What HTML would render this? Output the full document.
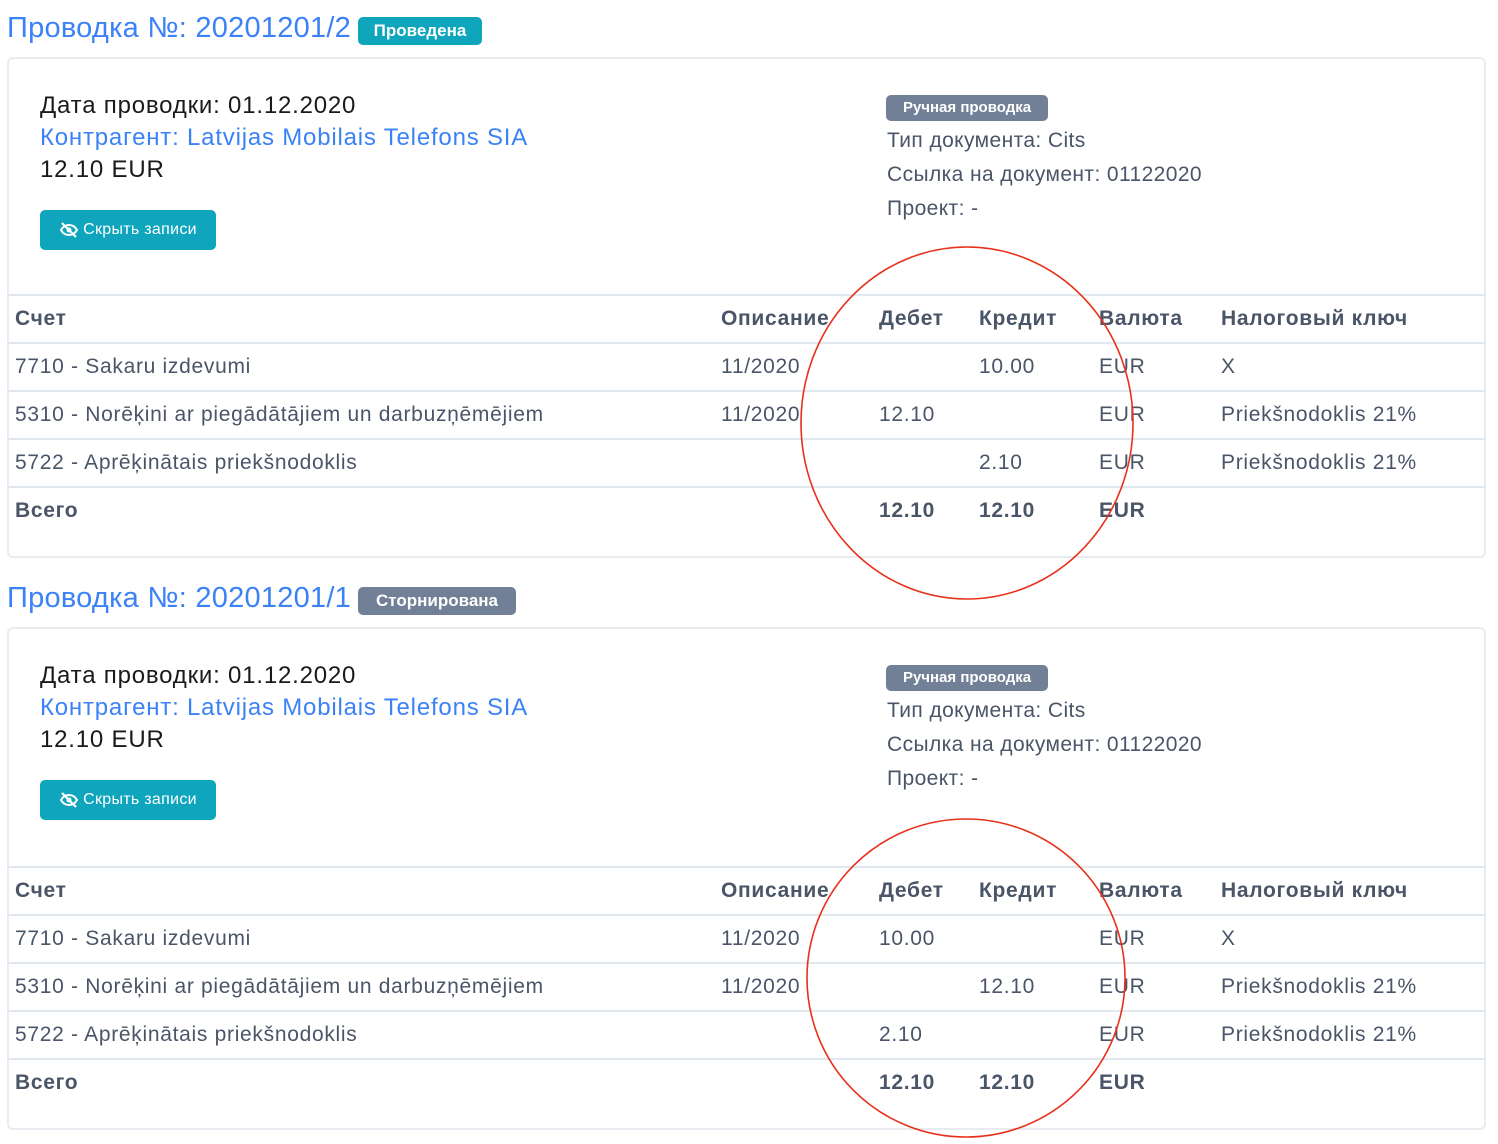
<!DOCTYPE html>
<html><head><meta charset="utf-8"><style>
*{margin:0;padding:0;box-sizing:border-box}
body{width:1498px;height:1144px;background:#fff;font-family:"Liberation Sans",sans-serif;position:relative;overflow:hidden;color:#4a5568}
.a{position:absolute;white-space:nowrap}
.title{font-size:29px;color:#3b82f6;letter-spacing:0.25px}
.badge{color:#fff;font-weight:bold;border-radius:5px;text-align:center}
.card{position:absolute;left:7px;width:1479px;border:2px solid #e8ebf0;border-radius:6px}
.line{position:absolute;left:7px;width:1479px;height:2px;background:#e2e8f0}
.t{font-size:21px;color:#4a5568;letter-spacing:0.7px;margin-top:-1px}
.i{font-size:21px;letter-spacing:0.4px;margin-top:0px}
.h{font-weight:bold;color:#4a5568}
.b{font-size:24px;letter-spacing:0.8px;margin-top:0px}
.btn{background:#0ea5bd;color:#fff;border-radius:5px;font-size:16px;letter-spacing:0.3px;display:flex;align-items:center;justify-content:center;gap:4px}
</style></head><body>

<!-- Block 1 -->
<div class="a title" style="left:7px;top:12px">Проводка №: 20201201/2</div>
<div class="a badge" style="left:358px;top:17px;width:124px;height:28px;background:#0ea5bd;font-size:17px;line-height:28px">Проведена</div>
<div class="card" style="top:57px;height:501px"></div>
<div class="a b" style="left:40px;top:92px;color:#1a1a1a">Дата проводки: 01.12.2020</div>
<div class="a b" style="left:40px;top:124px;color:#3b82f6">Контрагент: Latvijas Mobilais Telefons SIA</div>
<div class="a b" style="left:40px;top:156px;color:#1a1a1a">12.10 EUR</div>
<div class="a btn" style="left:40px;top:210px;width:176px;height:40px"><svg width="20" height="16" viewBox="0 0 20 16"><path d="M2 8c2-3.5 5-5 8-5s6 1.5 8 5c-2 3.5-5 5-8 5s-6-1.5-8-5z" fill="none" stroke="#fff" stroke-width="2"/><circle cx="10" cy="8" r="2.5" fill="#fff"/><path d="M3 1l14 14" stroke="#fff" stroke-width="2.2"/></svg>Скрыть записи</div>
<div class="a badge" style="left:886px;top:95px;width:162px;height:26px;background:#718096;font-size:15px;line-height:26px">Ручная проводка</div>
<div class="a i" style="left:887px;top:129px">Тип документа: Cits</div>
<div class="a i" style="left:887px;top:163px">Ссылка на документ: 01122020</div>
<div class="a i" style="left:887px;top:197px">Проект: -</div>
<div class="line" style="top:294px"></div>
<div class="line" style="top:342px"></div>
<div class="line" style="top:390px"></div>
<div class="line" style="top:438px"></div>
<div class="line" style="top:486px"></div>
<div class="a t h" style="left:15px;top:308px">Счет</div><div class="a t h" style="left:721px;top:308px">Описание</div><div class="a t h" style="left:879px;top:308px">Дебет</div><div class="a t h" style="left:979px;top:308px">Кредит</div><div class="a t h" style="left:1099px;top:308px">Валюта</div><div class="a t h" style="left:1221px;top:308px">Налоговый ключ</div>
<div class="a t" style="left:15px;top:356px">7710 - Sakaru izdevumi</div><div class="a t" style="left:721px;top:356px">11/2020</div><div class="a t" style="left:979px;top:356px">10.00</div><div class="a t" style="left:1099px;top:356px">EUR</div><div class="a t" style="left:1221px;top:356px">X</div>
<div class="a t" style="left:15px;top:404px">5310 - Norēķini ar piegādātājiem un darbuzņēmējiem</div><div class="a t" style="left:721px;top:404px">11/2020</div><div class="a t" style="left:879px;top:404px">12.10</div><div class="a t" style="left:1099px;top:404px">EUR</div><div class="a t" style="left:1221px;top:404px">Priekšnodoklis 21%</div>
<div class="a t" style="left:15px;top:452px">5722 - Aprēķinātais priekšnodoklis</div><div class="a t" style="left:979px;top:452px">2.10</div><div class="a t" style="left:1099px;top:452px">EUR</div><div class="a t" style="left:1221px;top:452px">Priekšnodoklis 21%</div>
<div class="a t h" style="left:15px;top:500px">Всего</div><div class="a t h" style="left:879px;top:500px">12.10</div><div class="a t h" style="left:979px;top:500px">12.10</div><div class="a t h" style="left:1099px;top:500px">EUR</div>

<!-- Block 2 -->
<div class="a title" style="left:7px;top:582px">Проводка №: 20201201/1</div>
<div class="a badge" style="left:358px;top:587px;width:158px;height:28px;background:#718096;font-size:17px;line-height:28px">Сторнирована</div>
<div class="card" style="top:627px;height:503px"></div>
<div class="a b" style="left:40px;top:662px;color:#1a1a1a">Дата проводки: 01.12.2020</div>
<div class="a b" style="left:40px;top:694px;color:#3b82f6">Контрагент: Latvijas Mobilais Telefons SIA</div>
<div class="a b" style="left:40px;top:726px;color:#1a1a1a">12.10 EUR</div>
<div class="a btn" style="left:40px;top:780px;width:176px;height:40px"><svg width="20" height="16" viewBox="0 0 20 16"><path d="M2 8c2-3.5 5-5 8-5s6 1.5 8 5c-2 3.5-5 5-8 5s-6-1.5-8-5z" fill="none" stroke="#fff" stroke-width="2"/><circle cx="10" cy="8" r="2.5" fill="#fff"/><path d="M3 1l14 14" stroke="#fff" stroke-width="2.2"/></svg>Скрыть записи</div>
<div class="a badge" style="left:886px;top:665px;width:162px;height:26px;background:#718096;font-size:15px;line-height:26px">Ручная проводка</div>
<div class="a i" style="left:887px;top:699px">Тип документа: Cits</div>
<div class="a i" style="left:887px;top:733px">Ссылка на документ: 01122020</div>
<div class="a i" style="left:887px;top:767px">Проект: -</div>
<div class="line" style="top:866px"></div>
<div class="line" style="top:914px"></div>
<div class="line" style="top:962px"></div>
<div class="line" style="top:1010px"></div>
<div class="line" style="top:1058px"></div>
<div class="a t h" style="left:15px;top:880px">Счет</div><div class="a t h" style="left:721px;top:880px">Описание</div><div class="a t h" style="left:879px;top:880px">Дебет</div><div class="a t h" style="left:979px;top:880px">Кредит</div><div class="a t h" style="left:1099px;top:880px">Валюта</div><div class="a t h" style="left:1221px;top:880px">Налоговый ключ</div>
<div class="a t" style="left:15px;top:928px">7710 - Sakaru izdevumi</div><div class="a t" style="left:721px;top:928px">11/2020</div><div class="a t" style="left:879px;top:928px">10.00</div><div class="a t" style="left:1099px;top:928px">EUR</div><div class="a t" style="left:1221px;top:928px">X</div>
<div class="a t" style="left:15px;top:976px">5310 - Norēķini ar piegādātājiem un darbuzņēmējiem</div><div class="a t" style="left:721px;top:976px">11/2020</div><div class="a t" style="left:979px;top:976px">12.10</div><div class="a t" style="left:1099px;top:976px">EUR</div><div class="a t" style="left:1221px;top:976px">Priekšnodoklis 21%</div>
<div class="a t" style="left:15px;top:1024px">5722 - Aprēķinātais priekšnodoklis</div><div class="a t" style="left:879px;top:1024px">2.10</div><div class="a t" style="left:1099px;top:1024px">EUR</div><div class="a t" style="left:1221px;top:1024px">Priekšnodoklis 21%</div>
<div class="a t h" style="left:15px;top:1072px">Всего</div><div class="a t h" style="left:879px;top:1072px">12.10</div><div class="a t h" style="left:979px;top:1072px">12.10</div><div class="a t h" style="left:1099px;top:1072px">EUR</div>

<svg class="a" style="left:0;top:0" width="1498" height="1144">
<ellipse cx="967" cy="423" rx="166" ry="176" fill="none" stroke="#e8301c" stroke-width="1.6"/>
<ellipse cx="966" cy="978" rx="159" ry="159" fill="none" stroke="#e8301c" stroke-width="1.6"/>
</svg>
</body></html>
